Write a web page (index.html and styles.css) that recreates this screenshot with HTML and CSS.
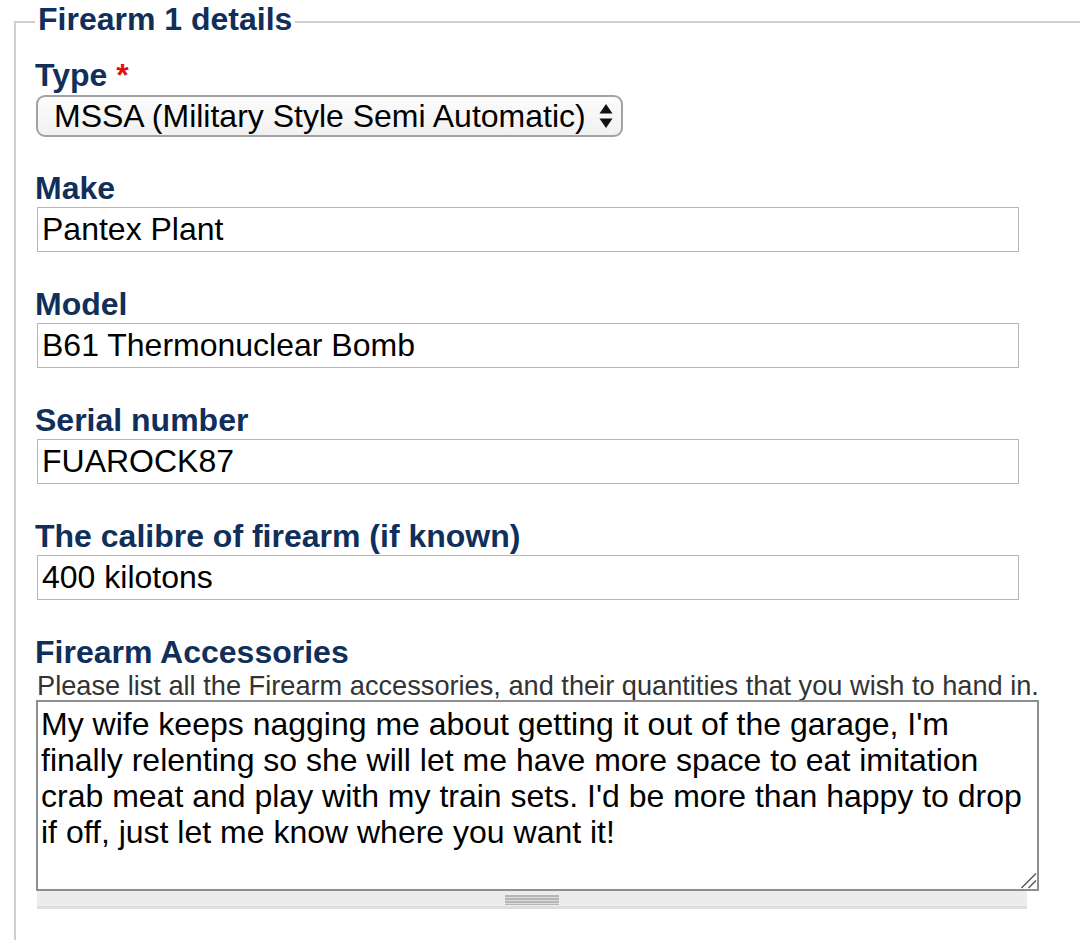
FILE: index.html
```html
<!DOCTYPE html>
<html lang="en">
<head>
<meta charset="utf-8">
<title>Firearm 1 details</title>
<link rel="stylesheet" href="styles.css">
</head>
<body>
<form class="form">
  <fieldset class="group">
    <legend class="group-title">Firearm 1 details</legend>

    <div class="field field-select">
      <label class="field-label" for="type">Type <span class="required">*</span></label>
      <span class="select-wrap">
        <select id="type" class="select">
          <option>MSSA (Military Style Semi Automatic)</option>
        </select>
        <svg class="select-arrows" width="14" height="26" viewBox="0 0 14 26" aria-hidden="true">
          <path d="M7 1 L13.5 10.5 H0.5 Z" fill="#111"/>
          <path d="M7 25 L13.5 15.5 H0.5 Z" fill="#111"/>
        </svg>
      </span>
    </div>

    <div class="field">
      <label class="field-label" for="make">Make</label>
      <input id="make" class="text-input" type="text" value="Pantex Plant">
    </div>

    <div class="field">
      <label class="field-label" for="model">Model</label>
      <input id="model" class="text-input" type="text" value="B61 Thermonuclear Bomb">
    </div>

    <div class="field">
      <label class="field-label" for="serial">Serial number</label>
      <input id="serial" class="text-input" type="text" value="FUAROCK87">
    </div>

    <div class="field">
      <label class="field-label" for="calibre">The calibre of firearm (if known)</label>
      <input id="calibre" class="text-input" type="text" value="400 kilotons">
    </div>

    <div class="field field-textarea">
      <label class="field-label" for="acc">Firearm Accessories</label>
      <div class="description">Please list all the Firearm accessories, and their quantities that you wish to hand in.</div>
      <div class="textarea-wrap">
        <textarea id="acc" class="textarea">My wife keeps nagging me about getting it out of the garage, I'm finally relenting so she will let me have more space to eat imitation crab meat and play with my train sets. I'd be more than happy to drop if off, just let me know where you want it!</textarea>
        <svg class="resizer" width="17" height="17" viewBox="0 0 17 17" aria-hidden="true">
          <path d="M1.5 16 L16 1.5 M8.5 16 L16 8.5" stroke="#555" stroke-width="1.4" fill="none"/>
        </svg>
      </div>
      <div class="grippie"><span class="grippie-handle"></span></div>
    </div>
  </fieldset>
</form>
</body>
</html>
```

FILE: styles.css
```css
html, body {
  margin: 0;
  padding: 0;
  overflow: hidden;
  background: #fff;
}

body {
  font-family: "Liberation Sans", Arial, Helvetica, sans-serif;
  color: #000;
}

.form {
  margin: 0;
}

.group {
  margin: 3px -40px 0 14px;
  padding: 16px 0 40px 19px;
  border: 2px solid #cfcfcf;
  min-width: 0;
}

.group-title {
  padding: 0 3px 6px 3px;
  margin: 0;
  font-size: 32px;
  line-height: 32px;
  font-weight: bold;
  color: #102f5b;
}

.field {
  margin-bottom: 34px;
}

.field-select {
  margin-bottom: 33px;
}

.field-label {
  display: block;
  font-size: 32px;
  line-height: 37px;
  font-weight: bold;
  color: #102f5b;
}

.required {
  color: #e01010;
}

.select-wrap {
  position: relative;
  display: inline-block;
  margin: 1px 0 0 1px;
  vertical-align: top;
}

.select {
  -webkit-appearance: none;
  appearance: none;
  display: block;
  box-sizing: border-box;
  width: 587px;
  height: 42px;
  margin: 0;
  padding: 0 26px 0 16px;
  font-family: inherit;
  font-size: 32px;
  color: #000;
  border: 2px solid #a2a2a2;
  border-radius: 9px;
  background: linear-gradient(#fcfcfc, #f1f1f1);
}

.select-arrows {
  position: absolute;
  right: 10px;
  top: 8px;
  pointer-events: none;
}

.text-input {
  display: block;
  box-sizing: border-box;
  width: 982px;
  height: 45px;
  margin: 0 0 0 2px;
  padding: 0 4px;
  font-family: inherit;
  font-size: 32px;
  color: #000;
  border: 1px solid #b6b6b6;
  background: #fff;
}

.field-textarea {
  margin-bottom: 0;
}

.description {
  font-size: 27.2px;
  line-height: 29px;
  color: #333;
  margin-left: 2px;
}

.textarea-wrap {
  position: relative;
  width: 1003px;
  margin-left: 1px;
}

.textarea {
  display: block;
  box-sizing: border-box;
  width: 1003px;
  height: 191px;
  margin: 0;
  padding: 4px 3px;
  font-family: inherit;
  font-size: 32px;
  line-height: 36px;
  color: #000;
  border: 2px solid #8e8e8e;
  background: #fff;
  resize: none;
  overflow: hidden;
}

.resizer {
  position: absolute;
  right: 2px;
  bottom: 2px;
  pointer-events: none;
}

.grippie {
  box-sizing: border-box;
  width: 990px;
  height: 18px;
  margin-left: 2px;
  background: #ececec;
  border-bottom: 3px solid #dedede;
  display: flex;
  justify-content: center;
  padding-top: 4px;
}

.grippie-handle {
  display: block;
  width: 54px;
  height: 10px;
  background: repeating-linear-gradient(#b5b5b5 0 2px, #dcdcdc 2px 3px);
}
```
